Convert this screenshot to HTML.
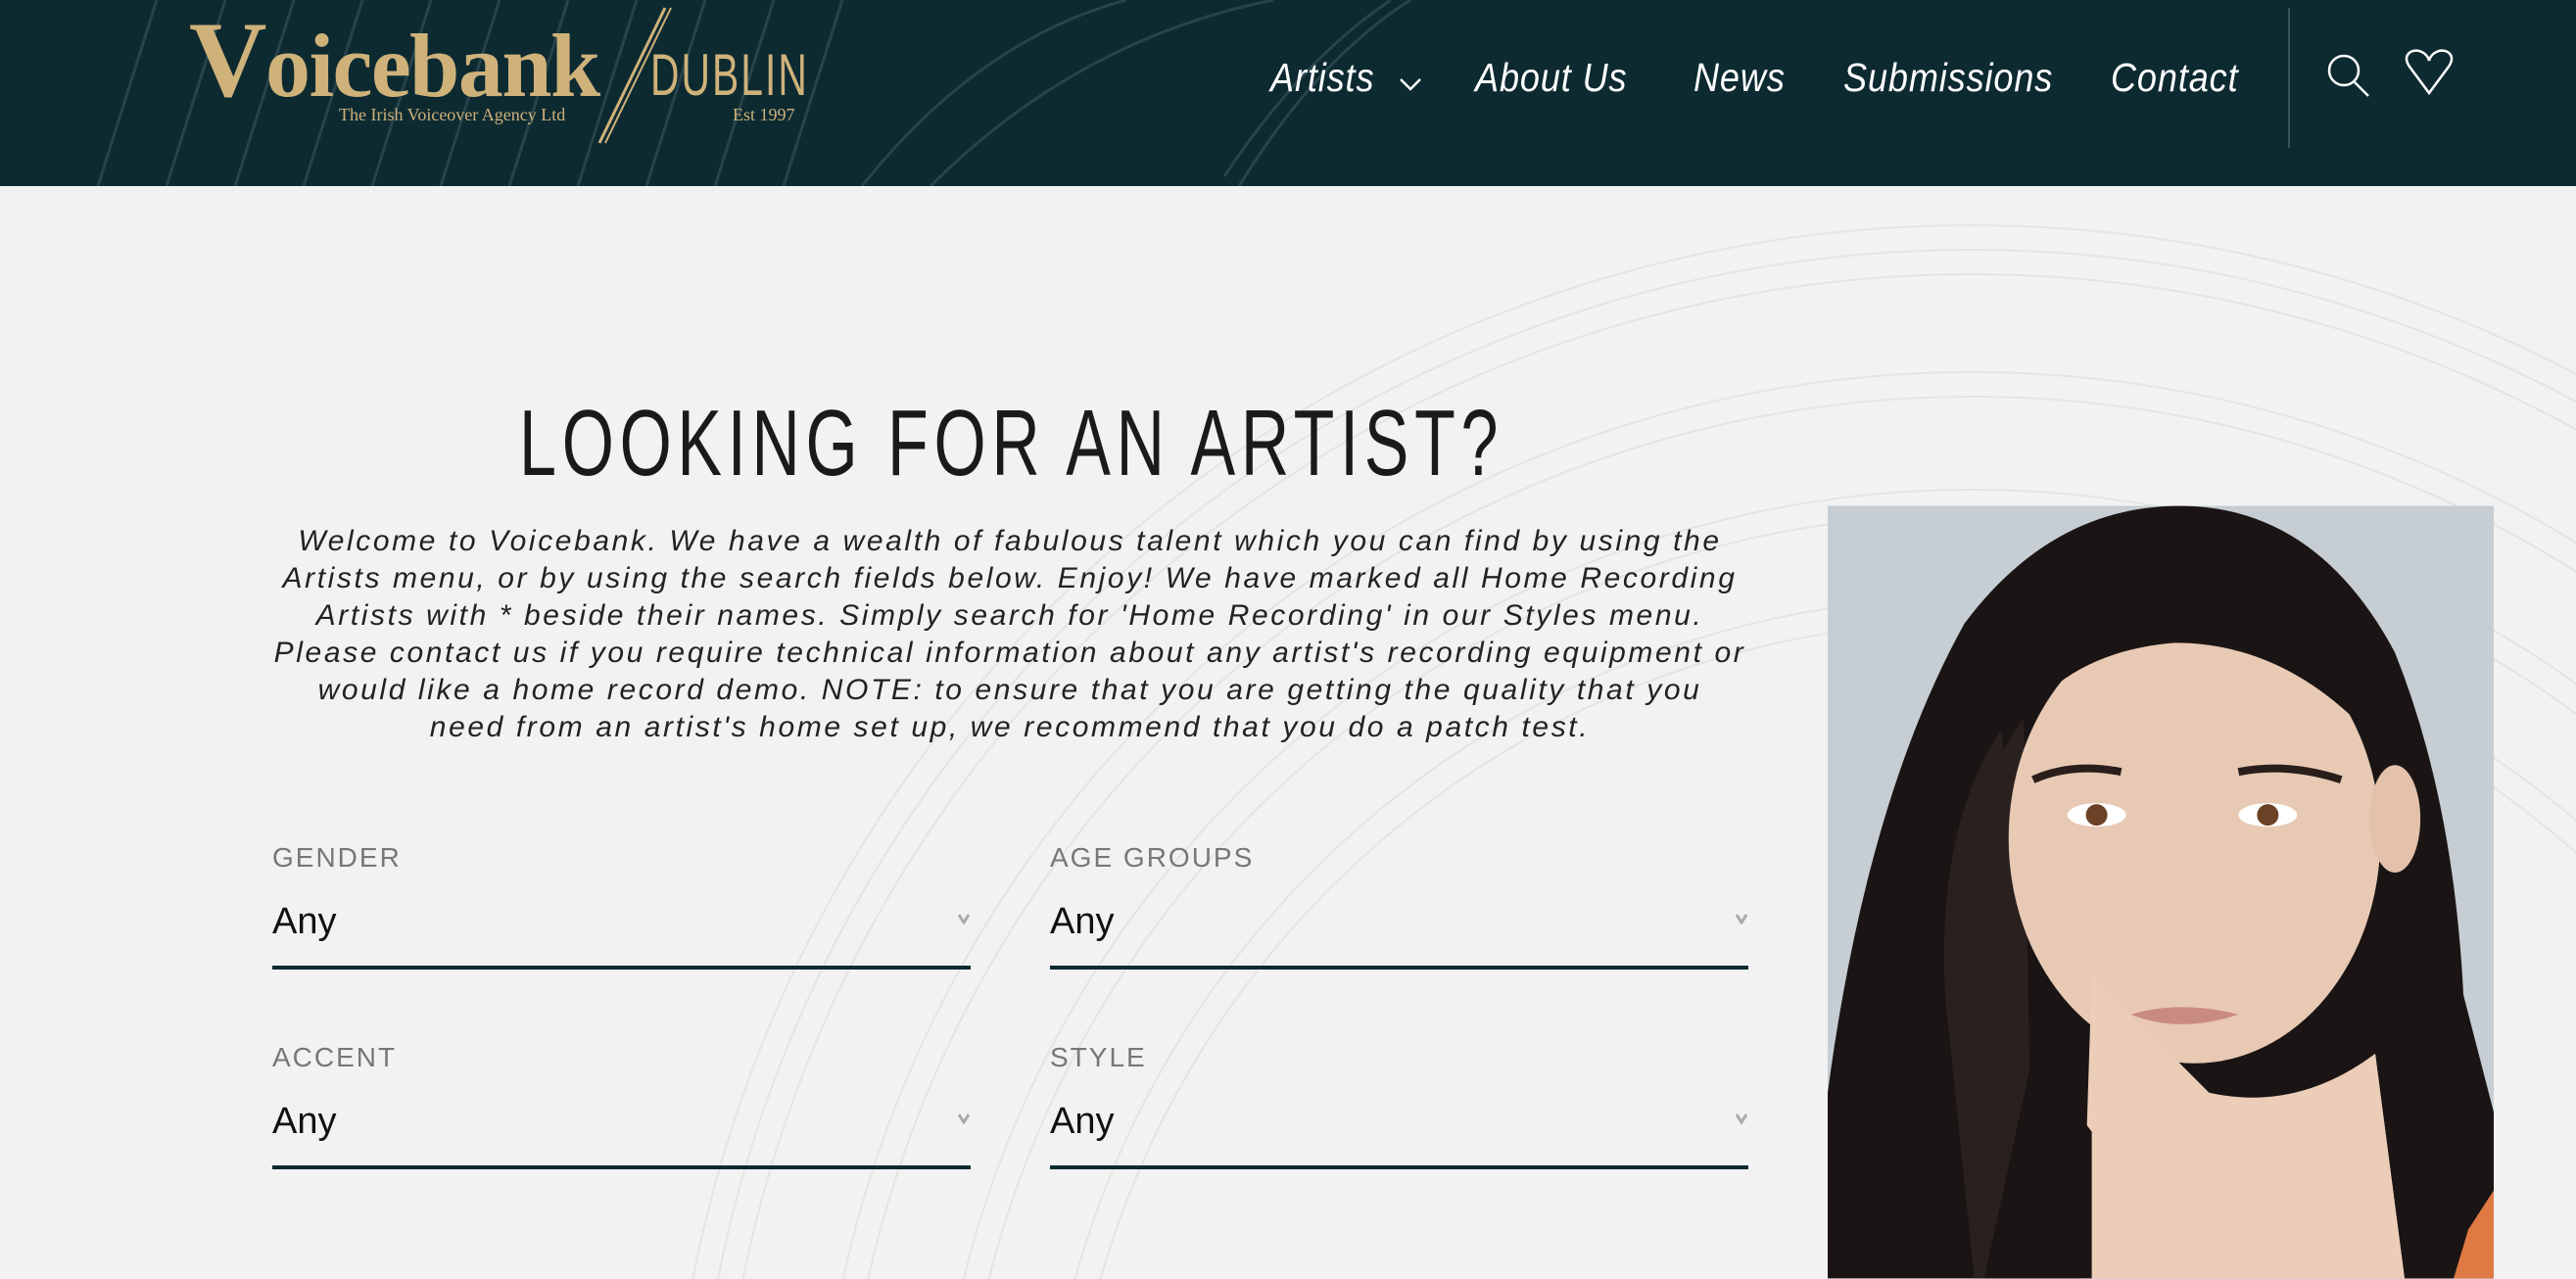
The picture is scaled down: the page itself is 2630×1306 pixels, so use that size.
<!DOCTYPE html>
<html><head><meta charset="utf-8"><style>
*{margin:0;padding:0;box-sizing:border-box}
html,body{width:2630px;height:1306px;overflow:hidden;background:#f2f2f2;font-family:"Liberation Sans",sans-serif;position:relative}
.abs{position:absolute}
header{position:absolute;left:0;top:0;width:2630px;height:190px;background:#0d2a31;overflow:hidden}
.nav{position:absolute;top:56px;color:#fff;font-style:italic;font-size:41px;white-space:nowrap;transform-origin:left top;transform:scaleX(.88);letter-spacing:1px}
.p{position:absolute;left:0;width:2062px;text-align:center;font-style:italic;font-size:30px;letter-spacing:2.6px;color:#222;white-space:nowrap}
.lbl{position:absolute;font-size:28px;color:#777;letter-spacing:2px}
.any{position:absolute;font-size:38px;color:#111}
.ul{position:absolute;height:4px;background:#0d2a31;width:713px}
.chev{position:absolute}
</style></head><body>
<svg class="abs" style="left:0;top:0" width="2630" height="1306">
<g fill="none" stroke="#e4e4e4" stroke-width="2">
<circle cx="2013" cy="1560" r="1330"/><circle cx="2013" cy="1560" r="1305"/><circle cx="2013" cy="1560" r="1280"/>
<circle cx="2013" cy="1560" r="1180"/><circle cx="2013" cy="1560" r="1155"/>
<circle cx="2013" cy="1560" r="1060"/><circle cx="2013" cy="1560" r="1035"/>
<circle cx="2013" cy="1560" r="950"/><circle cx="2013" cy="1560" r="925"/>
</g></svg>
<header>
<svg class="abs" style="left:0;top:0" width="2630" height="190"><g stroke="#28434a" stroke-width="3" fill="none">
<line x1="100" y1="190" x2="160" y2="0"/><line x1="170" y1="190" x2="230" y2="0"/><line x1="240" y1="190" x2="300" y2="0"/><line x1="310" y1="190" x2="370" y2="0"/><line x1="380" y1="190" x2="440" y2="0"/><line x1="450" y1="190" x2="510" y2="0"/><line x1="520" y1="190" x2="580" y2="0"/><line x1="590" y1="190" x2="650" y2="0"/><line x1="660" y1="190" x2="720" y2="0"/><line x1="730" y1="190" x2="790" y2="0"/><line x1="800" y1="190" x2="860" y2="0"/>
<path d="M880 190 Q1000 40 1150 0"/><path d="M950 190 Q1100 40 1300 0"/><path d="M1250 180 Q1330 60 1420 0"/><path d="M1265 190 Q1345 60 1440 0"/>
</g>
<line x1="679" y1="8" x2="612" y2="146" stroke="#cfb27a" stroke-width="3"/><line x1="685" y1="8" x2="618" y2="146" stroke="#cfb27a" stroke-width="2"/>
<line x1="2337" y1="8" x2="2337" y2="151" stroke="#3a5359" stroke-width="2"/>
<circle cx="2393" cy="72" r="15" fill="none" stroke="#fff" stroke-width="2.5"/><line x1="2404" y1="84" x2="2418" y2="98" stroke="#fff" stroke-width="2.5"/>
<path d="M2480 95 L2460 68 C2452 56 2462 50 2470 52 C2476 54 2479 58 2480 62 C2481 58 2484 54 2490 52 C2498 50 2508 56 2500 68 Z" fill="none" stroke="#fff" stroke-width="2.5"/>
</svg>
<div class="abs" style="left:193px;top:-2px;color:#cfb27a;font-family:'Liberation Serif',serif;font-weight:bold;font-size:92px;letter-spacing:-1.5px;white-space:nowrap"><span style="font-size:110px">V</span>oicebank</div>
<div class="abs" style="left:664px;top:42px;color:#cfb27a;font-size:60px;white-space:nowrap;transform:scaleX(.68);transform-origin:left top;letter-spacing:3px">DUBLIN</div>
<div class="abs" style="left:346px;top:107px;color:#cfb27a;font-family:'Liberation Serif',serif;font-size:18px;white-space:nowrap">The Irish Voiceover Agency Ltd</div>
<div class="abs" style="left:748px;top:107px;color:#cfb27a;font-family:'Liberation Serif',serif;font-size:18px">Est 1997</div>
<div class="nav" style="left:1297px">Artists</div>
<svg class="abs" style="left:1428px;top:78px" width="24" height="16"><path d="M2 3 L12 13 L22 3" fill="none" stroke="#fff" stroke-width="2.5"/></svg>
<div class="nav" style="left:1506px">About Us</div>
<div class="nav" style="left:1729px">News</div>
<div class="nav" style="left:1882px">Submissions</div>
<div class="nav" style="left:2155px">Contact</div>
</header>
<div class="abs" style="left:530px;top:398px;font-size:96px;color:#1a1a1a;white-space:nowrap;transform:scaleX(.712);transform-origin:left top;letter-spacing:8px">LOOKING FOR AN ARTIST?</div>
<div class="p" style="top:536px">Welcome to Voicebank. We have a wealth of fabulous talent which you can find by using the</div>
<div class="p" style="top:574px">Artists menu, or by using the search fields below. Enjoy! We have marked all Home Recording</div>
<div class="p" style="top:612px">Artists with * beside their names. Simply search for 'Home Recording' in our Styles menu.</div>
<div class="p" style="top:650px">Please contact us if you require technical information about any artist's recording equipment or</div>
<div class="p" style="top:688px">would like a home record demo. NOTE: to ensure that you are getting the quality that you</div>
<div class="p" style="top:726px">need from an artist's home set up, we recommend that you do a patch test.</div>

<div class="lbl" style="left:278px;top:860px">GENDER</div>
<div class="lbl" style="left:1072px;top:860px">AGE GROUPS</div>
<div class="any" style="left:278px;top:920px">Any</div>
<div class="any" style="left:1072px;top:920px">Any</div>
<svg class="chev" style="left:978px;top:932px" width="12" height="12"><path d="M1 2 L6 10 L11 2" fill="none" stroke="#aaa" stroke-width="3"/></svg>
<svg class="chev" style="left:1772px;top:932px" width="12" height="12"><path d="M1 2 L6 10 L11 2" fill="none" stroke="#aaa" stroke-width="3"/></svg>
<div class="ul" style="left:278px;top:986px"></div>
<div class="ul" style="left:1072px;top:986px"></div>

<div class="lbl" style="left:278px;top:1064px">ACCENT</div>
<div class="lbl" style="left:1072px;top:1064px">STYLE</div>
<div class="any" style="left:278px;top:1124px">Any</div>
<div class="any" style="left:1072px;top:1124px">Any</div>
<svg class="chev" style="left:978px;top:1136px" width="12" height="12"><path d="M1 2 L6 10 L11 2" fill="none" stroke="#aaa" stroke-width="3"/></svg>
<svg class="chev" style="left:1772px;top:1136px" width="12" height="12"><path d="M1 2 L6 10 L11 2" fill="none" stroke="#aaa" stroke-width="3"/></svg>
<div class="ul" style="left:278px;top:1190px"></div>
<div class="ul" style="left:1072px;top:1190px"></div>

<svg class="abs" style="left:1866px;top:516px" width="680" height="790" viewBox="0 0 681 790">
<rect width="681" height="790" fill="#c6cdd3"/>
<path d="M0 790 L0 600 Q40 300 140 120 Q230 0 360 0 Q500 0 580 150 Q640 300 650 500 L681 620 L681 790 Z" fill="#1a1514"/>
<path d="M150 790 L120 500 Q110 300 200 200 L210 790 Z" fill="#2a211f"/>
<ellipse cx="375" cy="340" rx="190" ry="230" fill="#e8c9b4"/>
<path d="M180 250 Q230 150 355 140 Q470 140 560 240 L560 180 Q470 40 355 40 Q230 40 170 180 Z" fill="#1a1514"/>
<path d="M270 480 L260 790 L590 790 L560 560 Q480 620 390 600 Z" fill="#ebcdb8"/>
<path d="M160 790 L210 560 Q240 600 270 640 L270 790 Z" fill="#1a1514"/>
<path d="M560 560 L590 790 L681 790 L681 620 L640 560 Z" fill="#1a1514"/>
<ellipse cx="580" cy="320" rx="26" ry="55" fill="#e3c1ab"/>
<path d="M210 280 Q250 262 300 272" stroke="#2a1e1a" stroke-width="8" fill="none"/>
<path d="M420 272 Q470 262 525 280" stroke="#2a1e1a" stroke-width="8" fill="none"/>
<ellipse cx="275" cy="316" rx="30" ry="12" fill="#fff"/><circle cx="275" cy="316" r="11" fill="#6b4226"/>
<ellipse cx="450" cy="316" rx="30" ry="12" fill="#fff"/><circle cx="450" cy="316" r="11" fill="#6b4226"/>
<path d="M310 520 Q360 505 420 520 Q360 540 310 520 Z" fill="#c98a84"/>
<path d="M655 740 L681 700 L681 790 L640 790 Z" fill="#e07a44"/>
</svg>
</body></html>
